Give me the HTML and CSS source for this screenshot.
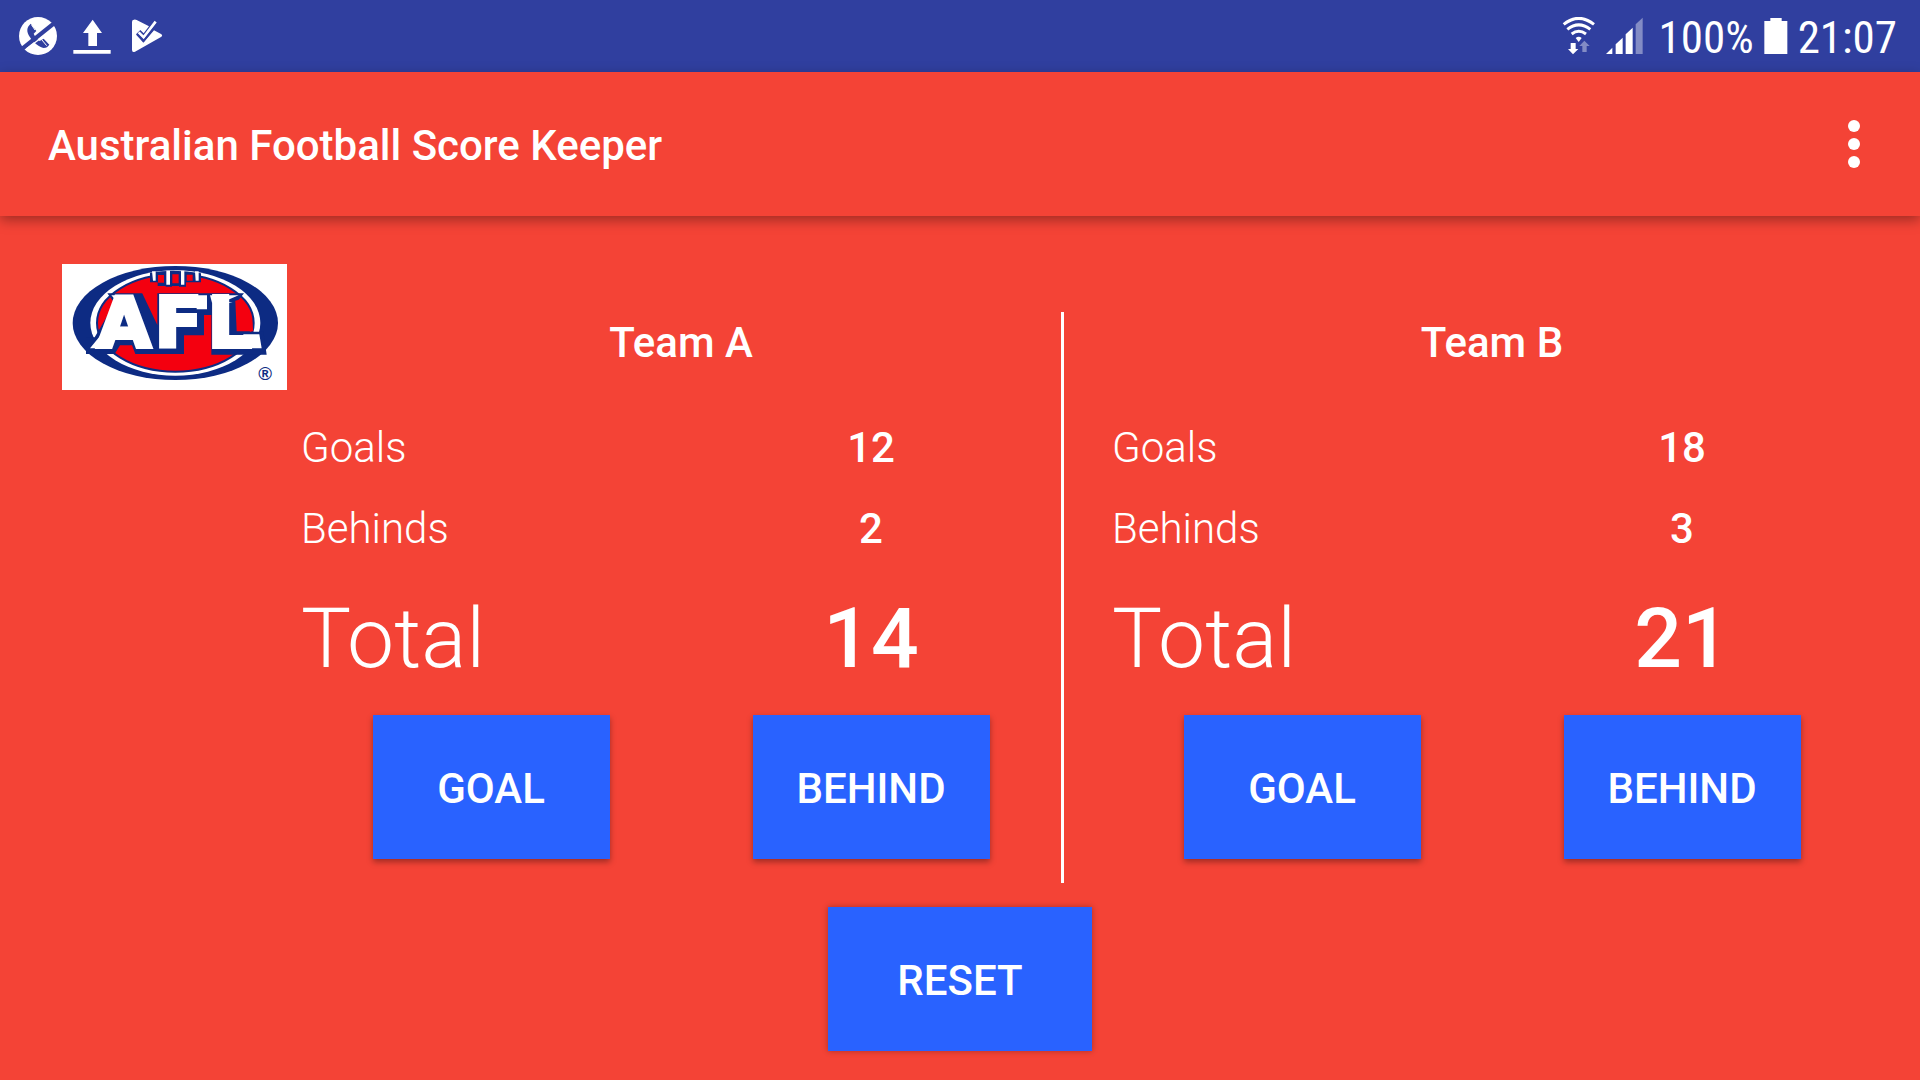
FILE: index.html
```html
<!DOCTYPE html>
<html lang="en">
<head>
<meta charset="utf-8">
<meta name="viewport" content="width=device-width, initial-scale=1">
<title>Australian Football Score Keeper</title>
<link rel="stylesheet" href="styles.css">
</head>
<body>
<div class="status">
  <svg class="status-icon" width="38" height="38" viewBox="57 51 114 114" aria-hidden="true">
    <circle cx="114" cy="108" r="57" fill="#fff"/>
    <path d="M92 71C80 82 78 94 90 112S118 141 131 144C139 144 144 140 148 134L131 116L119 123C112 119 104 108 101 101L109 93Z" fill="#303f9f"/>
    <path d="M95 75l10 15M126 120l14 17" stroke="#fff" stroke-width="3"/>
    <path d="M68 145L161 71" stroke="#303f9f" stroke-width="13"/>
    <path d="M79 147L164 83" stroke="#fff" stroke-width="4"/>
  </svg>
  <svg class="status-icon" width="38" height="38" viewBox="219 53 114 114" aria-hidden="true">
    <path d="M278 61L306 101H291V140H265V101H249ZM220 152H332V163H220Z" fill="#fff"/>
  </svg>
  <svg class="status-icon" width="38" height="38" viewBox="381 51 114 114" aria-hidden="true">
    <path d="M402 59Q396 59 396 66V149Q396 159 405 155L483 111Q490 107 483 102L462 91L430 128L408 103L421 90L431 100L447 79L410 60Q406 58 402 59Z" fill="#fff"/>
    <path d="M416 97L431 112L467 65" fill="none" stroke="#fff" stroke-width="8"/>
    <path d="M411 103L431 123L472 71" fill="none" stroke="#303f9f" stroke-width="5"/>
  </svg>
  <div class="status-right">
    <svg width="34" height="38" viewBox="68 51 102 114" aria-hidden="true">
      <g fill="none" stroke="#fff" stroke-width="9">
        <path d="M73 73Q118 37 164 73"/><path d="M84 88Q118 61 153 88"/><path d="M97 102Q118 86 140 102"/>
      </g>
      <path d="M109 114Q118 107 127 114L118 126Z" fill="#fff"/>
      <path d="M94 129H109V147H117L101 163L86 147H94Z" fill="#fff"/>
      <path d="M135 122L151 138H142V156H129V138H120Z" fill="#838cc5"/>
    </svg>
    <svg width="37" height="38" viewBox="202 51 111 114" aria-hidden="true">
      <path d="M202 162L221 143V162ZM231 133L252 113V162H231ZM261 103L282 83V162H261Z" fill="#fff"/>
      <path d="M291 73L312 53V162H291Z" fill="#838cc5"/>
    </svg>
    <span class="status-text battery-level">100%</span>
    <svg width="24" height="38" viewBox="665 51 72 114" aria-hidden="true">
      <path d="M684 54H718V63H735V162H666V63H684Z" fill="#fff"/>
    </svg>
    <time class="status-text">21:07</time>
  </div>
</div>

<header class="appbar">
  <h1 class="title">Australian Football Score Keeper</h1>
  <button class="menu" type="button" aria-label="More options">
    <svg width="12" height="48" viewBox="0 0 12 48" fill="#fff" aria-hidden="true">
      <circle cx="6" cy="6" r="6"/><circle cx="6" cy="24" r="6"/><circle cx="6" cy="42" r="6"/>
    </svg>
  </button>
</header>

<main>
  <div class="board">
    <svg class="logo" viewBox="36 42 675 378" role="img" aria-label="AFL">
      <rect x="36" y="42" width="675" height="378" fill="#fff"/>
      <ellipse cx="376" cy="219" rx="308" ry="171" fill="#0d2b83"/>
      <ellipse cx="376" cy="219" rx="255" ry="158" fill="#fff"/>
      <ellipse cx="376" cy="219" rx="235" ry="146" fill="#f4000f" stroke="#0d2b83" stroke-width="6"/>
      <path d="M300 68V97H323V108H347V110H366V108H387V110H408V97H453V70Q376 56 300 68" fill="#0d2b83"/>
      <path d="M324 75H342V98H324ZM367 73H386V100H367ZM410 74H428V92H410Z" fill="#f4000f"/>
      <path d="M306 64H317V92H309ZM349 62H360V104H349ZM393 62H403V104H393ZM435 64H446V92H437Z" fill="#fff"/>
      <path d="M108 262H134L194 160L172 130H582L566 150L600 245H640L650 314H484V195H462V256H402V312H256L246 286H210L194 312H108Z" fill="#0d2b83"/>
      <path d="M276 128H322V225Z" fill="#f4000f"/>
      <path d="M556 152L572 148Q606 190 610 244H560Z" fill="#f4000f"/>
      <path d="M184 136H244L226 172L220 156L200 154ZM440 136H471V178H440ZM480 136H566L526 153L548 158H486ZM120 295L150 258H190L176 295ZM580 253H628L635 295H580Z" fill="#fff"/>
      <text class="logo-name" x="142 314 473" y="290">AFL</text>
      <text class="logo-mark" x="645" y="389" text-anchor="middle">®</text>
    </svg>

    <section class="team">
      <h2 class="team-name">Team A</h2>
      <table class="scores">
        <tr><th scope="row">Goals</th><td>12</td></tr>
        <tr><th scope="row">Behinds</th><td>2</td></tr>
        <tr class="total"><th scope="row">Total</th><td>14</td></tr>
      </table>
      <div class="actions">
        <button class="btn" type="button">GOAL</button>
        <button class="btn" type="button">BEHIND</button>
      </div>
    </section>

    <div class="divider"></div>

    <section class="team team-b">
      <h2 class="team-name">Team B</h2>
      <table class="scores">
        <tr><th scope="row">Goals</th><td>18</td></tr>
        <tr><th scope="row">Behinds</th><td>3</td></tr>
        <tr class="total"><th scope="row">Total</th><td>21</td></tr>
      </table>
      <div class="actions">
        <button class="btn" type="button">GOAL</button>
        <button class="btn" type="button">BEHIND</button>
      </div>
    </section>
  </div>
  <div class="footer">
    <button class="btn btn-reset" type="button">RESET</button>
  </div>
</main>
</body>
</html>
```
FILE: styles.css
```css
* {
  box-sizing: border-box;
}

body {
  margin: 0;
  min-height: 100vh;
  background: #f44336;
  color: #fff;
  font-family: Roboto, sans-serif;
  font-size: 42px;
}

svg {
  display: block;
  flex: none;
}

.status {
  display: flex;
  align-items: center;
  gap: 16px;
  height: 72px;
  padding: 0 23px 0 19px;
  background: #303f9f;
}

.status-right {
  display: flex;
  align-items: center;
  gap: 10px;
  margin-left: auto;
}

.status-text {
  padding-top: 3px;
  font-family: "Roboto Condensed", "Liberation Sans Narrow", Roboto, sans-serif;
  font-size: 45px;
  line-height: 69px;
}

.battery-level {
  padding-left: 6px;
}

.appbar {
  display: flex;
  align-items: center;
  justify-content: space-between;
  height: 144px;
  padding: 0 48px;
  background: #f44336;
  box-shadow: 0 4px 12px rgba(0, 0, 0, 0.35);
}

.title {
  margin: 0;
  padding-top: 2px;
  font-size: 42px;
  font-weight: 500;
}

.menu {
  padding: 12px;
  border: 0;
  background: none;
}

.board {
  display: grid;
  grid-template-columns: 225px minmax(0, 774fr) 3px minmax(0, 808fr);
  padding: 48px 48px 24px 62px;
}

.logo {
  width: 225px;
  height: 126px;
}

.logo-name {
  font-family: "DejaVu Sans", sans-serif;
  font-size: 208px;
  font-weight: 700;
  fill: #fff;
  stroke: #fff;
  stroke-width: 12px;
}

.logo-mark {
  font-family: "Liberation Sans", sans-serif;
  font-size: 56px;
  font-weight: 700;
  fill: #0d2b83;
}

.team {
  margin: 48px 0 24px 14px;
}

.team-b {
  margin-left: 48px;
}

.divider {
  margin-top: 48px;
  background: #fff;
}

.team-name {
  margin: 0 0 33px;
  font-size: 42px;
  font-weight: 500;
  line-height: 62px;
  text-align: center;
}

.scores {
  width: 100%;
  border-collapse: collapse;
  table-layout: fixed;
  line-height: 81px;
}

.scores th,
.scores td {
  padding: 0;
}

.scores th {
  font-weight: 300;
  text-align: left;
}

.scores td {
  font-weight: 500;
  text-align: center;
}

.scores .total {
  font-size: 84px;
  line-height: 140px;
}

.actions {
  display: grid;
  grid-template-columns: 1fr 1fr;
  justify-items: center;
  margin-top: 6px;
}

.btn {
  width: 237px;
  height: 144px;
  padding: 2px 0 0;
  border: 0;
  background: #2962ff;
  box-shadow: 0 3px 6px rgba(0, 0, 0, 0.35);
  color: #fff;
  font-family: inherit;
  font-size: 42px;
  font-weight: 500;
}

.footer {
  display: flex;
  justify-content: center;
  padding-bottom: 29px;
}

.btn-reset {
  width: 264px;
  box-shadow: 0 0 6px rgba(0, 0, 0, 0.3);
}
```
